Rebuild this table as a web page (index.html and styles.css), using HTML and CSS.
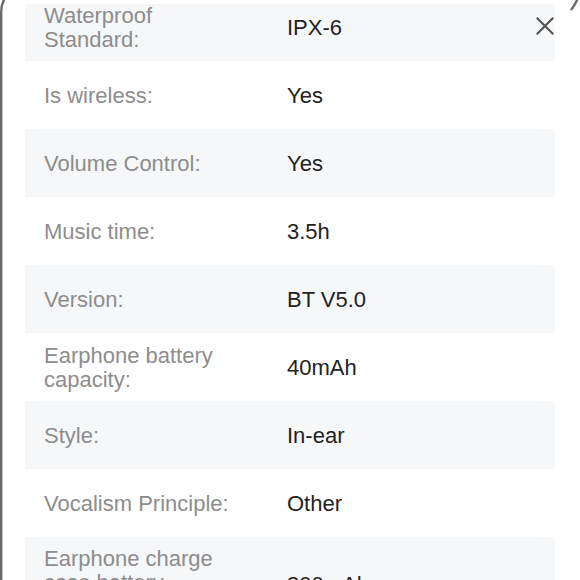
FILE: index.html
```html
<!DOCTYPE html>
<html>
<head>
<meta charset="utf-8">
<link rel="stylesheet" href="styles.css">
</head>
<body>
<div class="screen">
  <div class="list">
    <div class="row alt"><div class="label">Waterproof Standard:</div><div class="value">IPX-6</div></div>
    <div class="row"><div class="label">Is wireless:</div><div class="value">Yes</div></div>
    <div class="row alt"><div class="label">Volume Control:</div><div class="value">Yes</div></div>
    <div class="row"><div class="label">Music time:</div><div class="value">3.5h</div></div>
    <div class="row alt"><div class="label">Version:</div><div class="value">BT V5.0</div></div>
    <div class="row"><div class="label">Earphone battery capacity:</div><div class="value">40mAh</div></div>
    <div class="row alt"><div class="label">Style:</div><div class="value">In-ear</div></div>
    <div class="row"><div class="label">Vocalism Principle:</div><div class="value">Other</div></div>
    <div class="row alt tall"><div class="label">Earphone charge case battery capacity:</div><div class="value">300mAh</div></div>
  </div>
  <div class="topstrip"></div>
  <button class="close" aria-label="Close">
    <svg width="18" height="18" viewBox="0 0 18 18"><path d="M1.5 1.5 L16.5 16.5 M16.5 1.5 L1.5 16.5" stroke="#555" stroke-width="2.2" stroke-linecap="square" fill="none"/></svg>
  </button>
  <svg class="frame" width="580" height="580" viewBox="0 0 580 580">
    <path d="M1.2 580 L1.2 12 Q1.2 4 5 -2" stroke="#6b6b6b" stroke-width="2.4" fill="none"/>
    <path d="M578 -2 Q575 5 571 10" stroke="#6b6b6b" stroke-width="2.4" fill="none"/>
  </svg>
</div>
</body>
</html>
```
FILE: styles.css
```css
html, body {
  margin: 0;
  padding: 0;
  background: #ffffff;
}
.screen {
  position: relative;
  width: 580px;
  height: 580px;
  overflow: hidden;
  font-family: "Liberation Sans", Arial, sans-serif;
}
.list {
  margin: -7px 25px 0 25px;
  display: flex;
  flex-direction: column;
}
.row {
  display: grid;
  grid-template-columns: 243px 1fr;
  align-items: center;
  height: 68px;
  padding-top: 2px;
  box-sizing: border-box;
  font-size: 22px;
  line-height: 24px;
}
.row.tall {
  height: 92px;
  align-items: start;
  padding-top: 10px;
}
.row.tall .value {
  padding-top: 26px;
}
.row.alt {
  background: #f6f7f9;
}
.label {
  padding-left: 19px;
  padding-right: 30px;
  color: #8d8d8d;
}
.value {
  color: #222222;
  padding-left: 19px;
}
.topstrip {
  position: absolute;
  left: 0;
  top: 0;
  width: 580px;
  height: 4px;
  background: #ffffff;
}
.close {
  position: absolute;
  top: 17px;
  left: 536px;
  width: 18px;
  height: 18px;
  padding: 0;
  border: 0;
  background: transparent;
  display: flex;
}
.frame {
  position: absolute;
  left: 0;
  top: 0;
  pointer-events: none;
}
```
